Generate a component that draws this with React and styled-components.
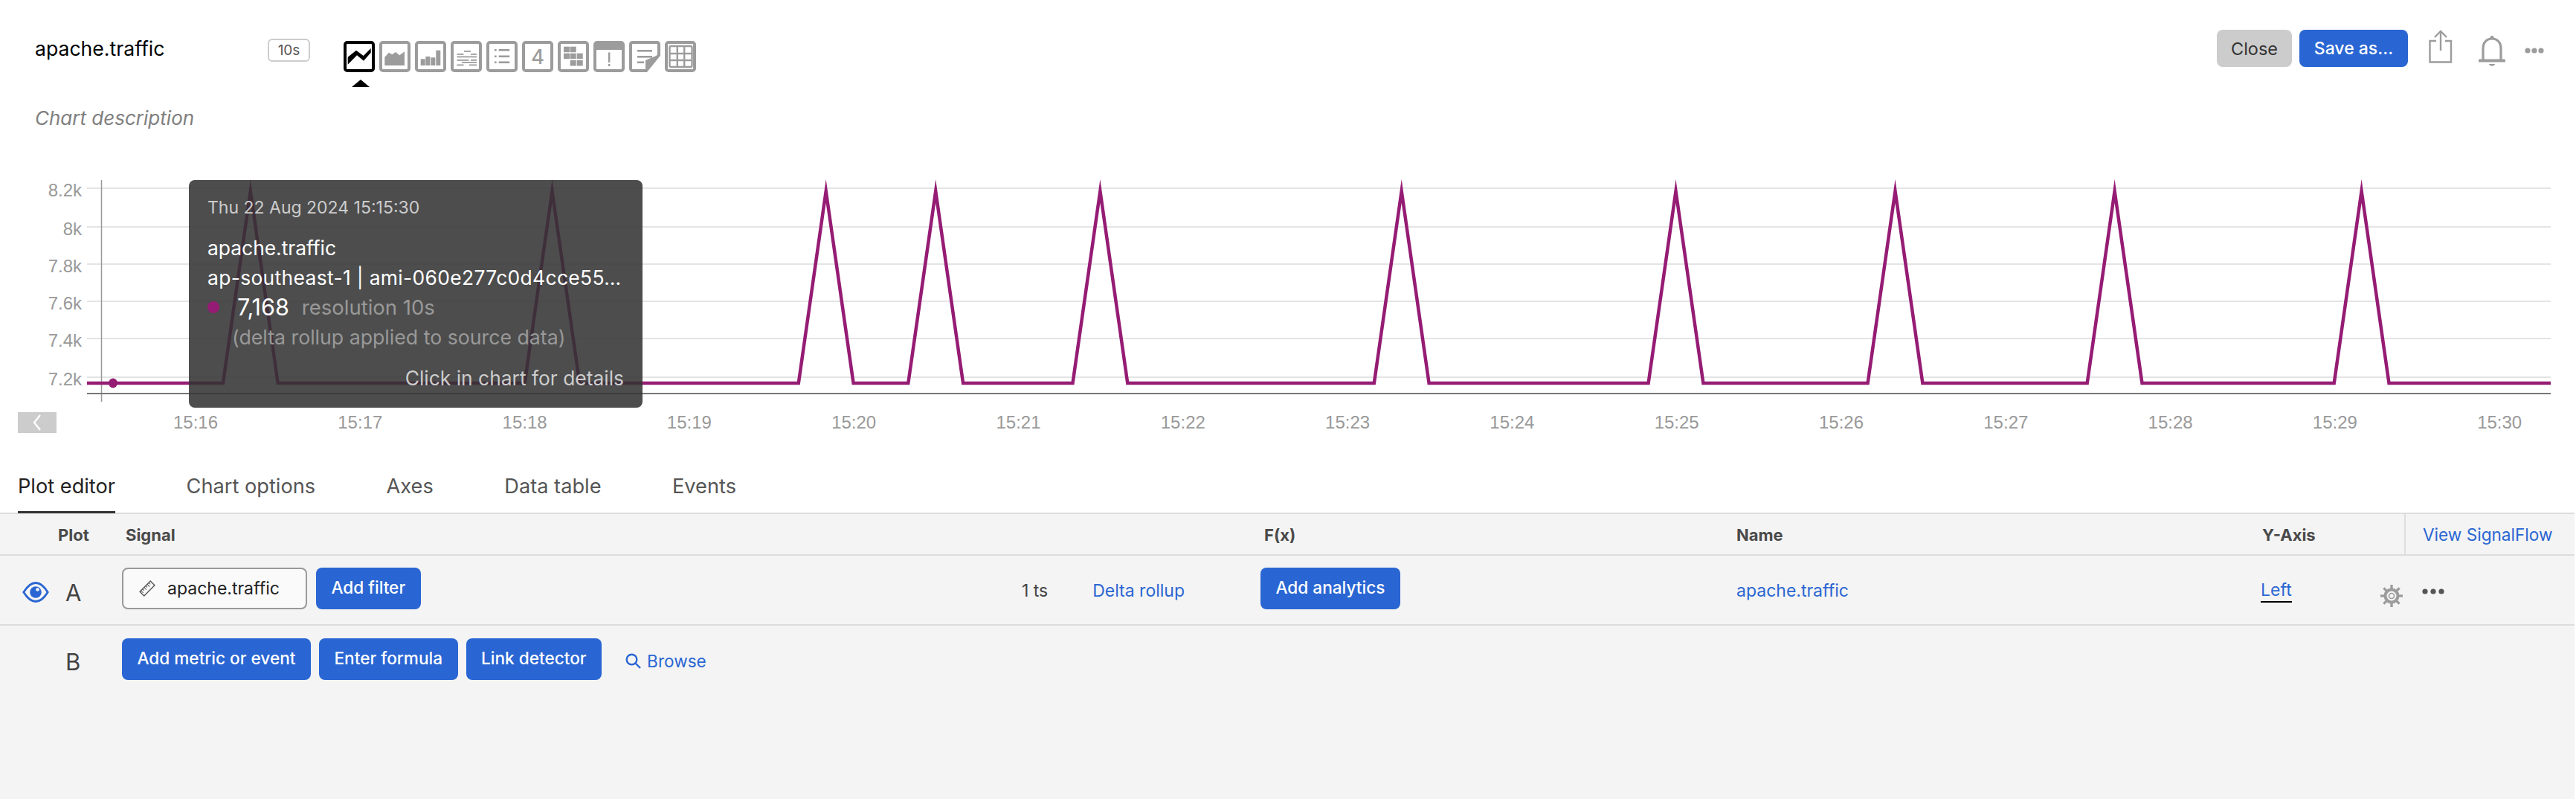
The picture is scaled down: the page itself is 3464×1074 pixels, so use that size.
import styled, { createGlobalStyle } from "styled-components";

const GlobalStyle = createGlobalStyle`
    html, body {
        margin: 0;
        padding: 0;
        background: #fff;
    }
    body {
        font-family: Inter, "Liberation Sans", sans-serif;
        color: #333;
    }
    * { box-sizing: border-box; }
`;

const BLUE = "#2a66d3";
const GREY = "#9c9c9c";
const PLOT = "#951c74";

const Page = styled.div`
    width: 3462px;
    height: 1074px;
    display: flex;
    flex-direction: column;
    background: #fff;
    overflow: hidden;
`;

const Header = styled.div`
    height: 232px;
    padding: 40px 41px 0 47px;
    display: flex;
    flex-direction: column;
`;

const TopRow = styled.div`
    display: flex;
    align-items: flex-start;
    height: 77px;
`;

const Title = styled.div`
    width: 313px;
    margin-top: 8px;
    font-size: 26.6px;
    line-height: 34px;
    color: #000;
`;

const Resolution = styled.div`
    width: 57px;
    height: 31px;
    margin-top: 12px;
    border: 2px solid #ccc;
    border-radius: 6px;
    font-size: 19px;
    line-height: 27px;
    text-align: center;
    color: #555;
`;

const TypeList = styled.div`
    display: flex;
    gap: 6px;
    margin: 15px 0 0 45px;
`;

const TypeItem = styled.div`
    position: relative;
    width: 42px;
    height: 42px;
`;

const Caret = styled.div`
    position: absolute;
    left: 11px;
    top: 52px;
    width: 0;
    height: 0;
    border-left: 12px solid transparent;
    border-right: 12px solid transparent;
    border-bottom: 10px solid #000;
`;

const Actions = styled.div`
    margin-left: auto;
    display: flex;
    align-items: flex-start;
`;

const Button = styled.button`
    height: ${(p) => p.$h || 56}px;
    padding: 0 20.5px 4px;
    border: 0;
    border-radius: 8px;
    background: ${(p) => (p.$plain ? "#ccc" : BLUE)};
    color: ${(p) => (p.$plain ? "#333" : "#fff")};
    font-family: inherit;
    font-size: ${(p) => p.$size || 22.6}px;
    font-weight: 500;
    white-space: nowrap;
`;

const CloseButton = styled(Button)`
    width: 101px;
    padding: 0;
    font-weight: 400;
`;

const SaveButton = styled(Button)`
    width: 146px;
    margin-left: 10px;
    padding: 0;
`;

const IconSlot = styled.div`
    margin-left: ${(p) => p.$ml}px;
    margin-top: ${(p) => p.$mt}px;
    display: flex;
`;

const Description = styled.div`
    font-size: 26px;
    line-height: 34px;
    font-style: italic;
    color: #808080;
    margin-top: 25px;
`;

const ChartArea = styled.div`
    position: relative;
    height: 368px;
`;

const ChartSvg = styled.svg`
    display: block;
    text {
        font-family: "Liberation Sans", Arial, sans-serif;
        font-size: 24px;
        fill: #999;
    }
`;

const PrevButton = styled.div`
    position: absolute;
    left: 24px;
    top: 322px;
    width: 52px;
    height: 28px;
    background: #ccc;
    display: flex;
    align-items: center;
    justify-content: center;
`;

const Tip = styled.div`
    position: absolute;
    left: 254px;
    top: 10px;
    width: 610px;
    height: 306px;
    padding: 20px 25px 0;
    border-radius: 8px;
    background: rgba(51, 51, 51, 0.87);
    display: flex;
    flex-direction: column;
    font-size: 26.4px;
    line-height: 40px;
    color: #fff;
`;

const TipDate = styled.div`
    font-size: 23px;
    line-height: 34px;
    color: #ccc;
    margin-bottom: 17px;
`;

const TipSeries = styled.div`
    letter-spacing: 0.35px;
    white-space: nowrap;
`;

const TipValueRow = styled.div`
    display: flex;
    align-items: center;
`;

const TipDot = styled.span`
    width: 16px;
    height: 16px;
    border-radius: 50%;
    background: ${PLOT};
    margin-right: 24px;
`;

const TipValue = styled.span`
    font-size: 30.5px;
    margin-right: 17px;
`;

const TipMuted = styled.span`
    color: #999;
    font-size: 27.5px;
`;

const TipNote = styled.div`
    color: #999;
    padding-left: 33px;
    font-size: 26.7px;
    white-space: nowrap;
`;

const TipHint = styled.div`
    margin-top: 15px;
    text-align: right;
    color: #ccc;
    white-space: nowrap;
`;

const Tabs = styled.div`
    height: 91px;
    padding: 0 0 0 24px;
    display: flex;
    gap: 95.5px;
    border-bottom: 2px solid #ddd;
`;

const Tab = styled.div`
    height: 90px;
    padding-top: 37px;
    font-size: 27.2px;
    line-height: 34px;
    color: ${(p) => (p.$active ? "#222" : "#555")};
    border-bottom: ${(p) => (p.$active ? "3px solid #333" : "0")};
    margin-bottom: -1px;
`;

const Editor = styled.div`
    flex: 1;
    background: #f4f4f4;
`;

const HeaderGrid = styled.div`
    display: grid;
    grid-template-columns: 164px 1531px 640px 705px 193px 1fr;
    height: 56px;
    border-bottom: 2px solid #ddd;
    font-size: 22px;
    font-weight: 700;
    line-height: 56px;
    color: #4a4a4a;
`;

const HeadCell = styled.div`
    padding-left: ${(p) => p.$pl || 0}px;
`;

const SignalFlow = styled.div`
    border-left: 2px solid #ddd;
    padding-left: 23px;
    font-weight: 400;
    font-size: 22.6px;
    color: ${BLUE};
`;

const PlotGrid = styled.div`
    display: grid;
    grid-template-columns: 164px 1531px 640px 705px 193px 1fr;
    height: 94px;
    padding-top: 16px;
    border-bottom: 2px solid #ddd;
    font-size: 23px;
`;

const PlotLabel = styled.div`
    display: flex;
    align-items: center;
    height: 56px;
    padding-left: 30px;
    padding-top: 10px;
    gap: 22px;
    font-size: 31px;
    color: #444;
`;

const SignalCell = styled.div`
    display: flex;
    align-items: flex-start;
    gap: 12px;
`;

const MetricInput = styled.div`
    width: 249px;
    height: 56px;
    padding-left: 21px;
    display: flex;
    align-items: center;
    gap: 16px;
    border: 2px solid #999;
    border-radius: 8px;
    background: #fafafa;
    font-size: 23px;
    color: #222;
`;

const RollupGroup = styled.div`
    margin-left: auto;
    margin-right: 102px;
    display: flex;
    gap: 60px;
    height: 56px;
    align-items: center;
    padding-top: 6px;
`;

const Muted = styled.span`
    color: #444;
`;

const Link = styled.span`
    color: ${BLUE};
`;

const NameCell = styled.div`
    height: 56px;
    display: flex;
    align-items: center;
    padding-top: 6px;
    color: ${BLUE};
`;

const AxisCell = styled.div`
    height: 56px;
    display: flex;
    align-items: center;
    justify-content: space-between;
    padding-top: 6px;
`;

const AxisLink = styled.span`
    color: ${BLUE};
    border-bottom: 2px solid #000;
    line-height: 30px;
`;

const GearSlot = styled.div`
    display: flex;
    margin: 14px 1px 0 0;
`;

const MoreCell = styled.div`
    height: 56px;
    padding: 28px 0 0 24px;
    display: flex;
`;

const AddRow = styled.div`
    display: flex;
    align-items: flex-start;
    padding-top: 17px;
`;

const AddLabel = styled(PlotLabel)`
    width: 164px;
    padding-left: 88px;
    padding-top: 6px;
`;

const AddButtons = styled.div`
    display: flex;
    gap: 11px;
`;

const Browse = styled.div`
    margin-left: 32px;
    height: 56px;
    padding-top: 4px;
    display: flex;
    align-items: center;
    gap: 8px;
    color: ${BLUE};
    font-size: 22.6px;
`;

// chart geometry, all in page pixels shifted by the chart's top
const CHART_TOP = 232;
const y = (v) => v - CHART_TOP;
const MINUTE = 221.3;
const STEP = MINUTE / 6;
const BASE = y(515);
const PEAK = y(257);

const peaks = [336.8, 742.5, 1110.7, 1258.2, 1479.4, 1884.7, 2253.5, 2548.5, 2843.6, 3175.6];

const linePoints = () => {
    const pts = [`117,${BASE}`];
    peaks.forEach((p) => {
        pts.push(`${p - STEP},${BASE}`, `${p},${PEAK}`, `${p + STEP},${BASE}`);
    });
    pts.push(`3430,${BASE}`);
    return pts.join(" ");
};

const gridLines = [
    { v: 253, label: "8.2k" },
    { v: 305, label: "8k" },
    { v: 355, label: "7.8k" },
    { v: 405, label: "7.6k" },
    { v: 455, label: "7.4k" },
    { v: 507, label: "7.2k" },
];

const ticks = Array.from({ length: 15 }, (_, i) => ({
    x: 263 + i * MINUTE,
    label: `15:${16 + i}`,
}));

function Chart() {
    return (
        <ChartSvg width="3462" height="368">
            {gridLines.map((g) => (
                <g key={g.label}>
                    <line x1="117" x2="3430" y1={y(g.v)} y2={y(g.v)} stroke="#e4e4e4" strokeWidth="2" />
                    <text x="110" y={y(g.v) + 11} textAnchor="end">{g.label}</text>
                </g>
            ))}
            <line x1="136.5" x2="136.5" y1={y(242)} y2={y(540)} stroke="#999" strokeWidth="1.5" />
            <line x1="117" x2="3430" y1={y(529)} y2={y(529)} stroke="#777" strokeWidth="2" />
            <polyline points={linePoints()} fill="none" stroke={PLOT} strokeWidth="4.5" strokeMiterlimit="12" />
            <ellipse cx="152" cy={BASE} rx="6" ry="6.5" fill={PLOT} />
            {ticks.map((t) => (
                <text key={t.label} x={t.x} y={y(576)} textAnchor="middle">{t.label}</text>
            ))}
        </ChartSvg>
    );
}

function TypeIcon({ active, children }) {
    const c = active ? "#000" : GREY;
    return (
        <TypeItem>
            <svg width="42" height="42" viewBox="0 0 42 42" style={{ color: c, display: "block" }}>
                <rect x="2" y="2" width="38" height="38" rx="3" fill="none" stroke="currentColor" strokeWidth="4" />
                {children}
            </svg>
            {active && <Caret />}
        </TypeItem>
    );
}

function Rects({ items }) {
    return items.map(([a, b, w, h], i) => <rect key={i} x={a} y={b} width={w} height={h} fill="currentColor" />);
}

function ChartTypes() {
    return (
        <TypeList>
            <TypeIcon active>
                <polygon points="5.7,21.7 17,12.7 26.7,20 36.7,10 36.7,15.7 27,26.7 18,19.3 5.7,31.7" fill="currentColor" />
            </TypeIcon>
            <TypeIcon>
                <polygon points="7.3,33 7.3,21.7 13,15.7 17.3,18.3 22,15 27.3,19.3 34,14.3 34,33" fill="currentColor" />
            </TypeIcon>
            <TypeIcon>
                <Rects items={[[7.7, 24.3, 6, 8.7], [14.3, 21, 6, 12], [21.3, 22.3, 6, 10.7], [28.3, 12.7, 6, 20.3]]} />
            </TypeIcon>
            <TypeIcon>
                <Rects items={[
                    [18, 13, 9, 1.8],
                    [8.5, 17, 9, 1.8], [27, 17, 8, 1.8],
                    [8.5, 20.5, 26.5, 1.8],
                    [8.5, 25, 16, 1.8], [27, 25, 8, 1.8],
                    [15, 28, 20, 1.8],
                    [8.5, 31.5, 9, 1.8], [25, 31.5, 10, 1.8],
                ]} />
            </TypeIcon>
            <TypeIcon>
                <Rects items={[
                    [11, 11, 2.6, 2.6], [11, 19.5, 2.6, 2.6], [11, 27.5, 2.6, 2.6],
                    [16.7, 11, 14.5, 2.6], [16.7, 19.5, 14.5, 2.6], [16.7, 27.5, 14.5, 2.6],
                ]} />
            </TypeIcon>
            <TypeIcon>
                <text x="21" y="31" textAnchor="middle" fontFamily="Inter, sans-serif" fontSize="27" fontWeight="500" fill="currentColor">4</text>
            </TypeIcon>
            <TypeIcon>
                <Rects items={[
                    [8, 7.7, 8, 7.5], [16.7, 7.7, 8, 7.5],
                    [8, 16.7, 8, 7.5], [16.7, 16.7, 8, 7.5], [25.7, 16.7, 8, 7.5],
                    [16.7, 26, 8, 7.5], [25.7, 26, 8, 7.5],
                ]} />
            </TypeIcon>
            <TypeIcon>
                <Rects items={[[2, 2, 38, 10], [20, 15.5, 2.4, 13.5], [20, 31, 2.4, 3]]} />
            </TypeIcon>
            <TypeItem>
                <svg width="42" height="42" viewBox="0 0 42 42" style={{ color: GREY, display: "block" }}>
                    <path d="M2 5 Q2 2 5 2 H37 Q40 2 40 5 V19 L23 40 H5 Q2 40 2 37 Z" fill="none" stroke="currentColor" strokeWidth="4" />
                    <polygon points="22,41 22,26 41,18" fill="currentColor" />
                    <Rects items={[[11, 12, 20, 2.6], [11, 20, 20, 2.6], [11, 27.5, 9, 2.6]]} />
                </svg>
            </TypeItem>
            <TypeIcon>
                <rect x="6.5" y="7" width="30" height="28" rx="2" fill="none" stroke="currentColor" strokeWidth="2.4" />
                <Rects items={[[15.6, 7, 2.4, 28], [25, 7, 2.4, 28], [6.5, 15.8, 30, 2.4], [6.5, 24.8, 30, 2.4]]} />
            </TypeIcon>
        </TypeList>
    );
}

function ShareIcon() {
    return (
        <svg width="32" height="46" viewBox="0 0 32 46" fill="none" stroke={GREY} strokeWidth="2.4">
            <path d="M10 15 H1.5 V43.5 H30 V15 H22" />
            <path d="M16 2 V28" />
            <path d="M8 10 L16 2 L24 10" />
        </svg>
    );
}

function BellIcon() {
    return (
        <svg width="36" height="44" viewBox="0 0 36 44" fill="none" stroke={GREY} strokeWidth="3.2">
            <path d="M6 33 V18 C6 10 11 5 18 5 C25 5 30 10 30 18 V33" />
            <path d="M1.5 34.5 H34.5" strokeWidth="4" strokeLinecap="round" />
            <circle cx="18" cy="3.5" r="2.5" fill={GREY} stroke="none" />
            <path d="M14 39 H22 C21.5 42.5 14.5 42.5 14 39 Z" fill={GREY} stroke="none" />
        </svg>
    );
}

function Dots({ color, gap = 11 }) {
    return (
        <svg width={gap * 2 + 8} height="8" viewBox={`0 0 ${gap * 2 + 8} 8`} fill={color}>
            <circle cx="4" cy="4" r="3.6" />
            <circle cx={gap + 4} cy="4" r="3.6" />
            <circle cx={gap * 2 + 4} cy="4" r="3.6" />
        </svg>
    );
}

function EyeIcon() {
    return (
        <svg width="36" height="30" viewBox="0 0 36 30">
            <path d="M1.8 15 C7 6.5 12.5 2.5 18 2.5 C23.5 2.5 29 6.5 34.2 15 C29 23.5 23.5 27.5 18 27.5 C12.5 27.5 7 23.5 1.8 15 Z" fill="none" stroke={BLUE} strokeWidth="2.8" />
            <circle cx="18" cy="15" r="7.8" fill={BLUE} />
            <circle cx="20.5" cy="11.5" r="2.3" fill="#f4f4f4" />
        </svg>
    );
}

function MetricIcon() {
    return (
        <svg width="22" height="22" viewBox="0 0 22 22" fill="none" stroke="#555" strokeWidth="1.4">
            <g transform="rotate(45 11 11)">
                <rect x="7" y="1" width="8" height="20" />
                <path d="M7 4 H10 M7 7 H11.5 M7 10 H10 M7 13 H11.5 M7 16 H10 M7 19 H11.5" strokeWidth="1" />
            </g>
        </svg>
    );
}

function GearIcon() {
    const spokes = [0, 45, 90, 135, 180, 225, 270, 315];
    return (
        <svg width="32" height="32" viewBox="0 0 32 32" fill="none" stroke={GREY}>
            {spokes.map((a) => (
                <line key={a} x1="16" y1="1" x2="16" y2="7" strokeWidth="3.4" transform={`rotate(${a} 16 16)`} />
            ))}
            <circle cx="16" cy="16" r="8.5" strokeWidth="4" />
            <circle cx="16" cy="16" r="3.5" strokeWidth="1.6" />
        </svg>
    );
}

function SearchIcon() {
    return (
        <svg width="21" height="21" viewBox="0 0 21 21" fill="none" stroke={BLUE} strokeWidth="2.4">
            <circle cx="8.5" cy="8.5" r="6.8" />
            <path d="M13.5 13.5 L20 20" />
        </svg>
    );
}

export default function App() {
    return (
        <Page>
            <GlobalStyle />
            <Header>
                <TopRow>
                    <Title>apache.traffic</Title>
                    <Resolution>10s</Resolution>
                    <ChartTypes />
                    <Actions>
                        <CloseButton $plain $h={50} $size={23.5}>Close</CloseButton>
                        <SaveButton $h={50} $size={23}>Save as…</SaveButton>
                        <IconSlot $ml={28} $mt={0}><ShareIcon /></IconSlot>
                        <IconSlot $ml={35} $mt={7}><BellIcon /></IconSlot>
                        <IconSlot $ml={26} $mt={24}><Dots color={GREY} gap={9} /></IconSlot>
                    </Actions>
                </TopRow>
                <Description>Chart description</Description>
            </Header>

            <ChartArea>
                <Chart />
                <PrevButton>
                    <svg width="14" height="22" viewBox="0 0 14 22" fill="none" stroke="#fff" strokeWidth="2.4">
                        <path d="M11 1 L3 11 L11 21" />
                    </svg>
                </PrevButton>
                <Tip>
                    <TipDate>Thu 22 Aug 2024 15:15:30</TipDate>
                    <div>apache.traffic</div>
                    <TipSeries>ap-southeast-1 | ami-060e277c0d4cce55…</TipSeries>
                    <TipValueRow>
                        <TipDot />
                        <TipValue>7,168</TipValue>
                        <TipMuted>resolution 10s</TipMuted>
                    </TipValueRow>
                    <TipNote>(delta rollup applied to source data)</TipNote>
                    <TipHint>Click in chart for details</TipHint>
                </Tip>
            </ChartArea>

            <Tabs>
                <Tab $active>Plot editor</Tab>
                <Tab>Chart options</Tab>
                <Tab>Axes</Tab>
                <Tab>Data table</Tab>
                <Tab>Events</Tab>
            </Tabs>

            <Editor>
                <HeaderGrid>
                    <HeadCell $pl={78}>Plot</HeadCell>
                    <HeadCell $pl={5}>Signal</HeadCell>
                    <HeadCell $pl={5}>F(x)</HeadCell>
                    <HeadCell>Name</HeadCell>
                    <HeadCell $pl={2}>Y-Axis</HeadCell>
                    <SignalFlow>View SignalFlow</SignalFlow>
                </HeaderGrid>
                <PlotGrid>
                    <PlotLabel><EyeIcon />A</PlotLabel>
                    <SignalCell>
                        <MetricInput><MetricIcon />apache.traffic</MetricInput>
                        <Button>Add filter</Button>
                        <RollupGroup>
                            <Muted>1 ts</Muted>
                            <Link>Delta rollup</Link>
                        </RollupGroup>
                    </SignalCell>
                    <div><Button>Add analytics</Button></div>
                    <NameCell>apache.traffic</NameCell>
                    <AxisCell>
                        <AxisLink>Left</AxisLink>
                        <GearSlot><GearIcon /></GearSlot>
                    </AxisCell>
                    <MoreCell><Dots color="#555" /></MoreCell>
                </PlotGrid>
                <AddRow>
                    <AddLabel>B</AddLabel>
                    <AddButtons>
                        <Button>Add metric or event</Button>
                        <Button>Enter formula</Button>
                        <Button>Link detector</Button>
                    </AddButtons>
                    <Browse><SearchIcon />Browse</Browse>
                </AddRow>
            </Editor>
        </Page>
    );
}
